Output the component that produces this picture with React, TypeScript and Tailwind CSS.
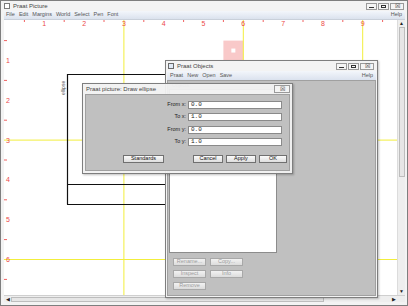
const U = 39.8;
const X0 = 4.5;
const Y0 = 21.7;
const px = (n: number) => X0 + n * U;
const py = (n: number) => Y0 + n * U;

const WinButtons = () => (
  <div className="flex items-start gap-[1px] pr-[3px]">
    <div className="w-[11px] h-[7px] border border-[#9a9a9a] bg-[#f4f4f4] flex items-end justify-center pb-[1px]">
      <div className="w-[5px] h-[1px] bg-[#333]" />
    </div>
    <div className="w-[11px] h-[7px] border border-[#9a9a9a] bg-[#f4f4f4] flex items-center justify-center">
      <div className="w-[5px] h-[3px] border border-[#333]" />
    </div>
    <div className="w-[14px] h-[7px] border border-[#9a9a9a] bg-[#f4f4f4] flex items-center justify-center text-[6px] leading-none text-[#333]">
      ☒
    </div>
  </div>
);

const Canvas = () => {
  const nums = [1, 2, 3, 4, 5, 6, 7, 8, 9];
  const vnums = [1, 2, 3, 4, 5, 6];
  return (
    <svg width="393" height="275" viewBox="4 21 393 275" className="block">
      <rect x="4" y="21" width="393" height="275" fill="#ffffff" />
      {/* pink selection square */}
      <rect x={px(5.5)} y={py(0.5)} width={U / 2} height={U / 2} fill="#f9c9c9" />
      <rect x={px(5.75) - 2} y={py(0.75) - 2} width="4" height="4" fill="#ffffff" />
      {/* yellow grid */}
      {[3, 6, 9].map((n) => (
        <line key={"v" + n} x1={px(n)} y1="21" x2={px(n)} y2="296" stroke="#f2ee3c" strokeWidth="1" />
      ))}
      {[3, 6].map((n) => (
        <line key={"h" + n} x1="4" y1={py(n)} x2="397" y2={py(n)} stroke="#f2ee3c" strokeWidth="1" />
      ))}
      {/* black frame lines */}
      <line x1="67.5" y1="75" x2="67.5" y2="205.5" stroke="#111" strokeWidth="1.2" />
      <line x1="67" y1="75.5" x2="170" y2="75.5" stroke="#111" strokeWidth="1.2" />
      <line x1="67" y1="185.5" x2="170" y2="185.5" stroke="#111" strokeWidth="1.2" />
      <line x1="67" y1="205.5" x2="170" y2="205.5" stroke="#111" strokeWidth="1.2" />
      <text x="0" y="0" fontSize="5" fill="#555" transform="translate(65 96) rotate(-90)" fontFamily="Liberation Sans">
        ellipse
      </text>
      {/* top ruler */}
      {nums.map((n) => (
        <g key={"t" + n}>
          <line x1={px(n - 0.5)} y1="21" x2={px(n - 0.5)} y2="23" stroke="#f06060" strokeWidth="1" />
          <text x={px(n)} y="27" fontSize="7" fill="#ec4a4a" textAnchor="middle" fontFamily="Liberation Sans">
            {n}
          </text>
        </g>
      ))}
      <line x1={px(9.5)} y1="21" x2={px(9.5)} y2="23" stroke="#f06060" strokeWidth="1" />
      {/* left ruler */}
      {vnums.map((n) => (
        <g key={"l" + n}>
          <line x1="4" y1={py(n - 0.5)} x2="7" y2={py(n - 0.5)} stroke="#f06060" strokeWidth="1" />
          <text x="6" y={py(n) + 2.5} fontSize="7" fill="#ec4a4a" fontFamily="Liberation Sans">
            {n}
          </text>
        </g>
      ))}
      <line x1="4" y1={py(6.5)} x2="7" y2={py(6.5)} stroke="#f06060" strokeWidth="1" />
    </svg>
  );
};

const Btn = ({ label, w, disabled }: { label: string; w: string; disabled?: boolean }) => (
  <div
    className={`${w} h-[8px] flex items-center justify-center text-[5.5px] leading-none border ${
      disabled
        ? "border-[#a8a8a8] text-[#9c9c9c] bg-gradient-to-b from-[#f2f2f2] to-[#dcdcdc]"
        : "border-[#707070] text-[#111] bg-gradient-to-b from-[#fbfbfb] to-[#dedede]"
    }`}
  >
    {label}
  </div>
);

const Field = ({ label, value }: { label: string; value: string }) => (
  <div className="flex items-center h-[7px]">
    <div className="w-[102px] text-right pr-[2px] text-[5.5px] leading-none text-[#222]">{label}</div>
    <div className="w-[94px] h-[8px] bg-white border border-[#8a8a8a] flex items-center pl-[2px] text-[6px] leading-none font-['Liberation_Mono',monospace] text-[#222]">
      {value}
    </div>
  </div>
);

export default function App() {
  return (
    <div className="relative w-[408px] h-[306px] overflow-hidden bg-white font-['Liberation_Sans',Arial,sans-serif]">
      {/* Praat Picture main window */}
      <div className="absolute inset-0 flex flex-col border border-[#7e7e7e] bg-[#f3f3f3]">
        <div className="h-[11px] flex items-center justify-between pl-[3px]">
          <div className="flex items-center gap-[3px]">
            <div className="w-[6px] h-[6px] border border-[#7a7a7a] bg-white" />
            <span className="text-[6px] leading-none text-[#444]">Praat Picture</span>
          </div>
          <WinButtons />
        </div>
        <div className="flex flex-col flex-1 pl-[3px] pr-[2px] pb-[3px]">
          <div className="h-[9px] flex items-center justify-between px-[2px] bg-gradient-to-b from-[#f3f6fb] to-[#dbe2ee] border-b border-[#c9d0da] text-[5.5px] leading-none text-[#555]">
            <div className="flex gap-[4px]">
              <span>File</span>
              <span>Edit</span>
              <span>Margins</span>
              <span>World</span>
              <span>Select</span>
              <span>Pen</span>
              <span>Font</span>
            </div>
            <span className="pr-[1px]">Help</span>
          </div>
          <div className="flex flex-1 min-h-0">
            <div className="flex-1 overflow-hidden">
              <Canvas />
            </div>
            <div className="w-[8px] flex flex-col items-center bg-[#eeeeee] border-l border-[#dcdcdc]">
              <div className="h-[7px] flex items-center text-[5px] leading-none text-[#222]">▲</div>
              <div className="w-[6px] h-[150px] bg-[#e6e6e6] border border-[#bdbdbd]" />
              <div className="flex-1" />
              <div className="h-[7px] flex items-center text-[5px] leading-none text-[#222]">▼</div>
            </div>
          </div>
          <div className="h-[7px] flex items-center bg-[#eeeeee] border-t border-[#cfcfcf]">
            <div className="w-[7px] flex justify-center text-[5px] leading-none text-[#222]">◀</div>
            <div className="w-[313px] h-[5px] bg-[#e6e6e6] border border-[#bdbdbd]" />
            <div className="flex-1" />
            <div className="w-[7px] flex justify-center text-[5px] leading-none text-[#222]">▶</div>
            <div className="w-[8px]" />
          </div>
        </div>
      </div>

      {/* Praat Objects window */}
      <div className="absolute left-[165px] top-[60px] w-[213px] h-[238px] flex flex-col border border-[#7e7e7e] bg-[#f3f3f3] shadow-[1px_1px_2px_rgba(0,0,0,0.25)]">
        <div className="h-[10px] flex items-center justify-between pl-[2px]">
          <div className="flex items-center gap-[3px]">
            <div className="w-[6px] h-[6px] border border-[#6a6a6a] bg-[#dfe9f5]" />
            <span className="text-[6px] leading-none text-[#444]">Praat Objects</span>
          </div>
          <WinButtons />
        </div>
        <div className="flex flex-col flex-1 px-[1px] pb-[1px]">
          <div className="h-[9px] flex items-center justify-between px-[3px] bg-gradient-to-b from-[#f3f6fb] to-[#dbe2ee] text-[5.5px] leading-none text-[#555]">
            <div className="flex gap-[4px]">
              <span>Praat</span>
              <span>New</span>
              <span>Open</span>
              <span>Save</span>
            </div>
            <span>Help</span>
          </div>
          <div className="flex-1 bg-[#c0c0c0] border border-[#a0a0a0] flex flex-col px-[1px]">
            <div className="h-[8px] flex items-center pl-[3px] text-[5px] leading-none text-[#555]">Objects:</div>
            <div className="w-[108px] h-[164px] bg-white border border-[#8c8c8c]" />
            <div className="flex flex-col gap-[4px] pl-[4px] pt-[5px]">
              <div className="flex gap-[4px]">
                <Btn label="Rename..." w="w-[33px]" disabled />
                <Btn label="Copy..." w="w-[33px]" disabled />
              </div>
              <div className="flex gap-[4px]">
                <Btn label="Inspect" w="w-[33px]" disabled />
                <Btn label="Info" w="w-[33px]" disabled />
              </div>
              <Btn label="Remove" w="w-[33px]" disabled />
            </div>
          </div>
        </div>
      </div>

      {/* Draw ellipse dialog */}
      <div className="absolute left-[82px] top-[83px] w-[211px] h-[91px] flex flex-col border border-[#7e7e7e] bg-[#f1f1f1]/95 shadow-[1px_1px_2px_rgba(0,0,0,0.25)]">
        <div className="h-[10px] flex items-center justify-between pl-[3px]">
          <span className="text-[6px] leading-none text-[#444]">Praat picture: Draw ellipse</span>
          <div className="w-[16px] h-[8px] mr-[2px] border border-[#9a9a9a] bg-[#f4f4f4] flex items-center justify-center text-[6px] leading-none text-[#333]">
            ☒
          </div>
        </div>
        <div className="flex-1 mx-[2px] mb-[2px] bg-[#c0c0c0] border border-[#a0a0a0] flex flex-col pt-[6px]">
          <div className="flex flex-col gap-[5.5px]">
            <Field label="From x:" value="0.0" />
            <Field label="To x:" value="1.0" />
            <Field label="From y:" value="0.0" />
            <Field label="To y:" value="1.0" />
          </div>
          <div className="flex items-center mt-[9px]">
            <div className="w-[37px]" />
            <Btn label="Standards" w="w-[41px]" />
            <div className="w-[29px]" />
            <Btn label="Cancel" w="w-[30px]" />
            <div className="w-[3px]" />
            <Btn label="Apply" w="w-[30px]" />
            <div className="w-[3px]" />
            <Btn label="OK" w="w-[28px]" />
          </div>
        </div>
      </div>
    </div>
  );
}
